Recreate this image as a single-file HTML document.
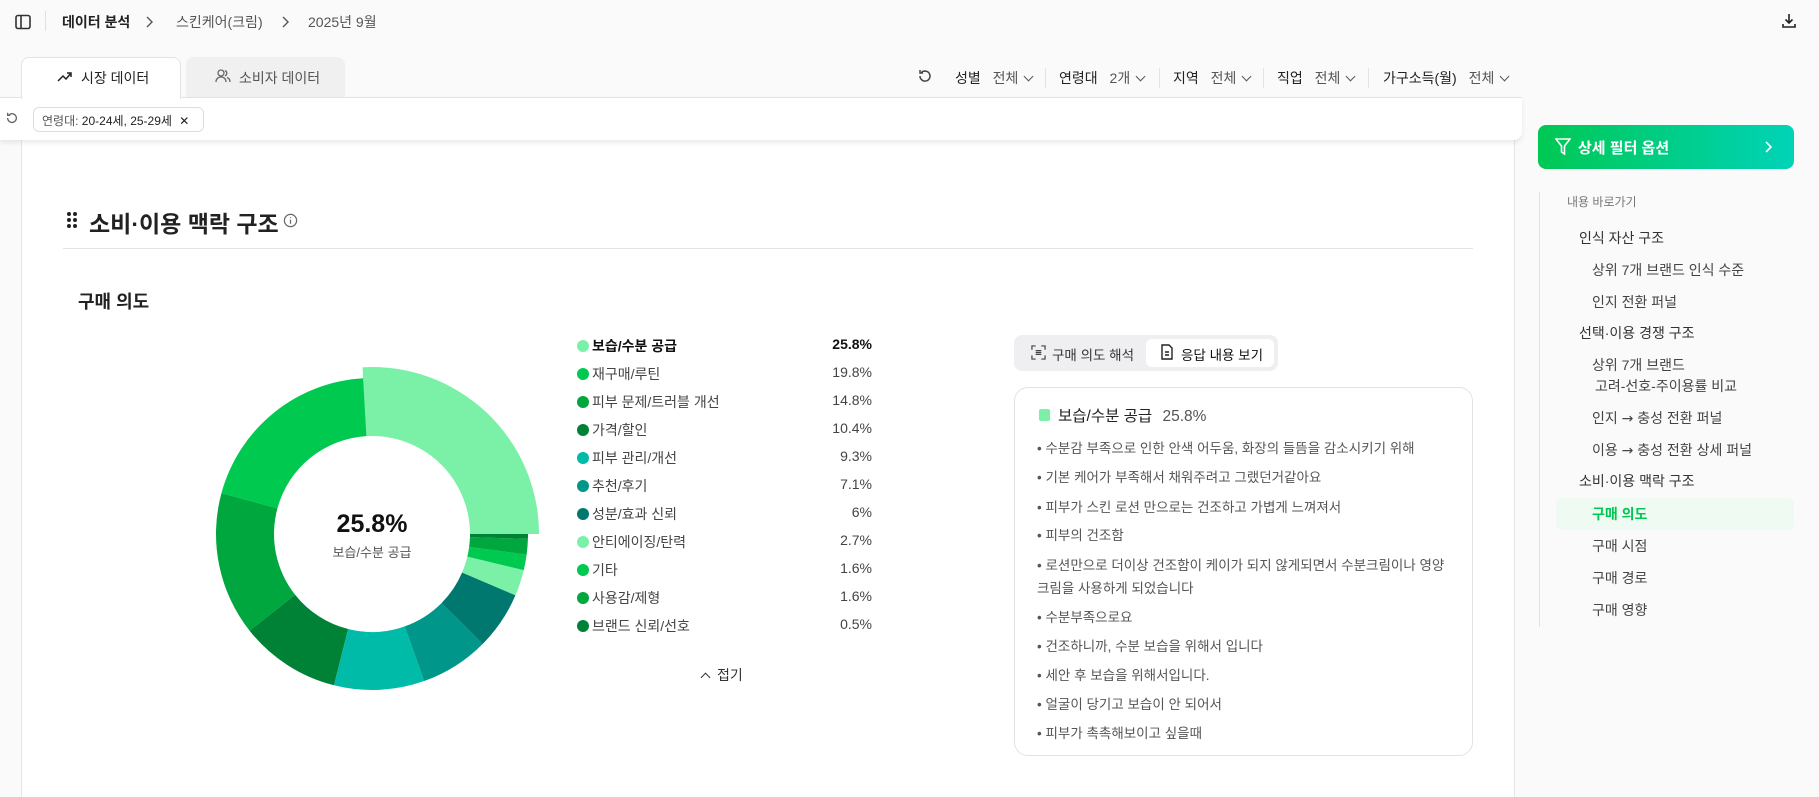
<!DOCTYPE html>
<html><head><meta charset="utf-8"><style>
*{box-sizing:border-box;margin:0;padding:0}
body{width:1819px;height:778px;overflow:hidden;background:#fafafa;font-family:"Liberation Sans","Noto Sans CJK KR",sans-serif;color:#222;position:relative}
.a{position:absolute;white-space:nowrap}
.g{color:#555}
.chev{display:inline-block;width:7px;height:7px;border-right:1.5px solid #555;border-bottom:1.5px solid #555;transform:rotate(45deg);margin-left:7px;position:relative;top:-3px}
.sep{position:absolute;top:68px;width:1px;height:20px;background:#e3e3e3}
.nav{position:absolute;font-size:14px;color:#333;white-space:nowrap}
.li{position:absolute;left:577px;font-size:14px;color:#444;width:295px}
.li i{position:absolute;left:0;top:4px;width:12px;height:12px;border-radius:50%}
.li span{position:absolute;left:15px}
.li b{position:absolute;right:0;font-weight:normal}
.bl{position:absolute;left:1037px;font-size:13.5px;color:#555;white-space:nowrap}
.ar{font-family:"DejaVu Sans",sans-serif;font-size:14px}
</style></head><body>
<!-- top bar -->
<svg class="a" style="left:14px;top:13px" width="18" height="18" viewBox="0 0 18 18"><rect x="2" y="2.5" width="14" height="13" rx="2" fill="none" stroke="#333" stroke-width="1.6"/><line x1="7" y1="3" x2="7" y2="15" stroke="#333" stroke-width="1.6"/></svg>
<div class="a" style="left:45px;top:11px;width:1px;height:20px;background:#e0e0e0"></div>
<div class="a" style="left:62px;top:12px;font-size:14px;font-weight:bold">데이터 분석</div>
<svg class="a" style="left:145px;top:16px" width="8" height="12" viewBox="0 0 8 12" fill="none" stroke="#555" stroke-width="1.4"><path d="M2 1l5 5-5 5"/></svg>
<div class="a g" style="left:176px;top:12px;font-size:14px">스킨케어(크림)</div>
<svg class="a" style="left:281px;top:16px" width="8" height="12" viewBox="0 0 8 12" fill="none" stroke="#555" stroke-width="1.4"><path d="M2 1l5 5-5 5"/></svg>
<div class="a g" style="left:308px;top:12px;font-size:14px">2025년 9월</div>
<svg class="a" style="left:1780px;top:12px" width="18" height="18" viewBox="0 0 18 18" fill="none" stroke="#222" stroke-width="1.6"><path d="M9 2v9M5.5 7.5 9 11l3.5-3.5M3 12v3h12v-3"/></svg>
<!-- tabs -->
<div class="a" style="left:21px;top:57px;width:160px;height:42px;background:#fff;border:1px solid #e3e3e3;border-bottom:none;border-radius:8px 8px 0 0;z-index:2"></div>
<svg class="a" style="left:57px;top:71px;z-index:3" width="16" height="12" viewBox="0 0 16 12" fill="none" stroke="#222" stroke-width="1.5"><path d="M1 10 6 5l3 3 5-6M10 2h4v4"/></svg>
<div class="a" style="left:81px;top:68px;font-size:14px;z-index:3">시장 데이터</div>
<div class="a" style="left:186px;top:57px;width:159px;height:40px;background:#f0f0f0;border-radius:8px 8px 0 0"></div>
<svg class="a" style="left:215px;top:68px" width="16" height="16" viewBox="0 0 16 16" fill="none" stroke="#666" stroke-width="1.3"><circle cx="6" cy="5" r="3"/><path d="M1 14c0-3 2-5 5-5s5 2 5 5M10 2.5a3 3 0 0 1 0 5.5M12 9.5c2 .7 3 2.3 3 4.5"/></svg>
<div class="a g" style="left:239px;top:68px;font-size:14px">소비자 데이터</div>
<!-- filters right -->
<svg class="a" style="left:917px;top:68px" width="16" height="16" viewBox="0 0 16 16" fill="none" stroke="#444" stroke-width="1.5"><path d="M3 8a5 5 0 1 0 1.5-3.5M3 2v3h3"/></svg>
<div class="a" style="left:955px;top:68px;font-size:14px">성별 <span class="g" style="margin-left:8px">전체</span><span class="chev"></span></div>
<div class="sep" style="left:1045px"></div>
<div class="a" style="left:1059px;top:68px;font-size:14px">연령대 <span class="g" style="margin-left:8px">2개</span><span class="chev"></span></div>
<div class="sep" style="left:1159px"></div>
<div class="a" style="left:1173px;top:68px;font-size:14px">지역 <span class="g" style="margin-left:8px">전체</span><span class="chev"></span></div>
<div class="sep" style="left:1263px"></div>
<div class="a" style="left:1277px;top:68px;font-size:14px">직업 <span class="g" style="margin-left:8px">전체</span><span class="chev"></span></div>
<div class="sep" style="left:1368px"></div>
<div class="a" style="left:1383px;top:68px;font-size:14px">가구소득(월) <span class="g" style="margin-left:8px">전체</span><span class="chev"></span></div>
<!-- main area -->
<div class="a" style="left:21px;top:97px;width:1494px;height:700px;background:#fff;border-left:1px solid #e6e6e6;border-right:1px solid #e6e6e6"></div>
<!-- filter bar -->
<div class="a" style="left:0;top:97px;width:1522px;height:43px;background:#fff;border-top:1px solid #e3e3e3;border-radius:0 0 8px 0;box-shadow:0 3px 5px rgba(0,0,0,.08);z-index:1"></div>
<svg class="a" style="left:5px;top:111px;z-index:2" width="14" height="14" viewBox="0 0 16 16" fill="none" stroke="#666" stroke-width="1.5"><path d="M3 8a5 5 0 1 0 1.5-3.5M3 2v3h3"/></svg>
<div class="a" style="left:33px;top:107px;width:171px;height:25px;border:1px solid #ddd;border-radius:6px;font-size:12px;padding:4px 8px;z-index:2"><span class="g">연령대:</span> 20-24세, 25-29세 <span style="margin-left:4px">✕</span></div>
<!-- heading -->
<svg class="a" style="left:67px;top:211px" width="10" height="18" viewBox="0 0 10 18" fill="#222"><circle cx="2" cy="3" r="2"/><circle cx="8" cy="3" r="2"/><circle cx="2" cy="9" r="2"/><circle cx="8" cy="9" r="2"/><circle cx="2" cy="15" r="2"/><circle cx="8" cy="15" r="2"/></svg>
<div class="a" style="left:89px;top:205px;font-size:23px;font-weight:bold">소비·이용 맥락 구조</div>
<svg class="a" style="left:283px;top:213px" width="15" height="15" viewBox="0 0 16 16" fill="none" stroke="#666" stroke-width="1.3"><circle cx="8" cy="8" r="6.5"/><path d="M8 7v4.5M8 4.5v1"/></svg>
<div class="a" style="left:63px;top:248px;width:1410px;height:1px;background:#e3e3e3"></div>
<div class="a" style="left:78px;top:288px;font-size:18px;font-weight:bold">구매 의도</div>
<!-- donut -->
<svg class="a" id="dn" style="left:0;top:0" width="600" height="778"></svg>
<div class="a" style="left:372px;top:510px;transform:translateX(-50%);font-size:25px;font-weight:bold;color:#111">25.8%</div>
<div class="a g" style="left:372px;top:542px;transform:translateX(-50%);font-size:13px">보습/수분 공급</div>
<!-- legend -->
<div id="lg"></div>
<div class="a" style="left:702px;top:665px;font-size:14px;color:#333"><span style="display:inline-block;width:7px;height:7px;border-left:1.5px solid #333;border-top:1.5px solid #333;transform:rotate(45deg);margin-right:8px;position:relative;top:1px"></span>접기</div>
<!-- toggle -->
<div class="a" style="left:1014px;top:335px;width:264px;height:36px;background:#efeff1;border-radius:8px"></div>
<div class="a" style="left:1146px;top:339px;width:128px;height:28px;background:#fff;border-radius:6px"></div>
<svg class="a" style="left:1031px;top:345px" width="15" height="15" viewBox="0 0 16 16" fill="none" stroke="#444" stroke-width="1.3"><path d="M1 5V1h4M11 1h4v4M15 11v4h-4M5 15H1v-4M5 6h6M5 8h6M5 10h6"/></svg>
<div class="a" style="left:1052px;top:344px;font-size:13.5px;color:#333">구매 의도 해석</div>
<svg class="a" style="left:1160px;top:344px" width="14" height="16" viewBox="0 0 14 16" fill="none" stroke="#222" stroke-width="1.4"><path d="M2 1h7l3 3v11H2zM5 8h4M5 11h4"/></svg>
<div class="a" style="left:1181px;top:344px;font-size:13.5px;color:#111">응답 내용 보기</div>
<!-- card -->
<div class="a" style="left:1014px;top:387px;width:459px;height:369px;border:1px solid #e3e3e3;border-radius:14px;background:#fff"></div>
<div class="a" style="left:1039px;top:409px;width:11px;height:12px;background:#7bf1a8;border-radius:2px"></div>
<div class="a" style="left:1058px;top:404px;font-size:15.5px;color:#222">보습/수분 공급 <span class="g" style="margin-left:6px">25.8%</span></div>
<div class="bl" style="top:437px">• 수분감 부족으로 인한 안색 어두움, 화장의 들뜸을 감소시키기 위해</div>
<div class="bl" style="top:466px">• 기본 케어가 부족해서 채워주려고 그랬던거같아요</div>
<div class="bl" style="top:496px">• 피부가 스킨 로션 만으로는 건조하고 가볍게 느껴져서</div>
<div class="bl" style="top:524px">• 피부의 건조함</div>
<div class="bl" style="top:554px">• 로션만으로 더이상 건조함이 케이가 되지 않게되면서 수분크림이나 영양</div>
<div class="bl" style="top:577px">크림을 사용하게 되었습니다</div>
<div class="bl" style="top:606px">• 수분부족으로요</div>
<div class="bl" style="top:635px">• 건조하니까, 수분 보습을 위해서 입니다</div>
<div class="bl" style="top:664px">• 세안 후 보습을 위해서입니다.</div>
<div class="bl" style="top:693px">• 얼굴이 당기고 보습이 안 되어서</div>
<div class="bl" style="top:722px">• 피부가 촉촉해보이고 싶을때</div>
<!-- sidebar -->
<div class="a" style="left:1538px;top:125px;width:256px;height:44px;border-radius:8px;background:linear-gradient(90deg,#00c853,#00d3b8)"></div>
<svg class="a" style="left:1555px;top:138px" width="16" height="18" viewBox="0 0 16 18" fill="none" stroke="#fff" stroke-width="1.6"><path d="M1 1h14L9.5 8v8l-3-2V8z"/></svg>
<div class="a" style="left:1578px;top:137px;font-size:15px;font-weight:bold;color:#fff">상세 필터 옵션</div>
<svg class="a" style="left:1764px;top:140px" width="8" height="14" viewBox="0 0 8 14" fill="none" stroke="#fff" stroke-width="1.6"><path d="M2 2l5 5-5 5"/></svg>
<div class="a" style="left:1539px;top:192px;width:1px;height:435px;background:#e3e3e3"></div>
<div class="nav" style="left:1567px;top:193px;font-size:12px;color:#777">내용 바로가기</div>
<div class="nav" style="left:1579px;top:228px">인식 자산 구조</div>
<div class="nav" style="left:1592px;top:260px;color:#444">상위 7개 브랜드 인식 수준</div>
<div class="nav" style="left:1592px;top:292px;color:#444">인지 전환 퍼널</div>
<div class="nav" style="left:1579px;top:323px">선택·이용 경쟁 구조</div>
<div class="nav" style="left:1592px;top:355px;color:#444">상위 7개 브랜드</div>
<div class="nav" style="left:1595px;top:376px;color:#444">고려-선호-주이용률 비교</div>
<div class="nav" style="left:1592px;top:408px;color:#444">인지 <span class="ar">→</span> 충성 전환 퍼널</div>
<div class="nav" style="left:1592px;top:440px;color:#444">이용 <span class="ar">→</span> 충성 전환 상세 퍼널</div>
<div class="nav" style="left:1579px;top:471px">소비·이용 맥락 구조</div>
<div class="a" style="left:1556px;top:498px;width:238px;height:32px;background:#effaf3;border-radius:6px"></div>
<div class="nav" style="left:1592px;top:504px;color:#00c853;font-weight:bold">구매 의도</div>
<div class="nav" style="left:1592px;top:536px;color:#444">구매 시점</div>
<div class="nav" style="left:1592px;top:568px;color:#444">구매 경로</div>
<div class="nav" style="left:1592px;top:600px;color:#444">구매 영향</div>
<script>
var d=[["보습/수분 공급",25.8,"#7bf1a8"],["재구매/루틴",19.8,"#00c950"],["피부 문제/트러블 개선",14.8,"#00a63e"],["가격/할인",10.4,"#008236"],["피부 관리/개선",9.3,"#00bba7"],["추천/후기",7.1,"#009689"],["성분/효과 신뢰",6,"#00786f"],["안티에이징/탄력",2.7,"#7bf1a8"],["기타",1.6,"#00c950"],["사용감/제형",1.6,"#00a63e"],["브랜드 신뢰/선호",0.5,"#008236"]];
var tot=0;d.forEach(function(x){tot+=x[1]});
var cx=372,cy=534,ri=98,s="",a=0,lg="";
function p(r,t){return (cx+r*Math.cos(t)).toFixed(2)+" "+(cy-r*Math.sin(t)).toFixed(2)}
d.forEach(function(x,i){var b=a+x[1]/tot*2*Math.PI,ro=i==0?167:156,l=(b-a)>Math.PI?1:0;
s+='<path fill="'+x[2]+'" d="M'+p(ro,a)+' A'+ro+' '+ro+' 0 '+l+' 0 '+p(ro,b)+' L'+p(ri,b)+' A'+ri+' '+ri+' 0 '+l+' 1 '+p(ri,a)+'Z"/>';a=b;
var y=336+i*28;lg+='<div class="li" style="top:'+y+'px'+(i==0?';font-weight:bold;color:#111':'')+'"><i style="background:'+x[2]+'"></i><span>'+x[0]+'</span><b'+(i==0?' style="font-weight:bold"':'')+'>'+x[1]+'%</b></div>';});
document.getElementById("dn").innerHTML=s;document.getElementById("lg").innerHTML=lg;
</script>
</body></html>
